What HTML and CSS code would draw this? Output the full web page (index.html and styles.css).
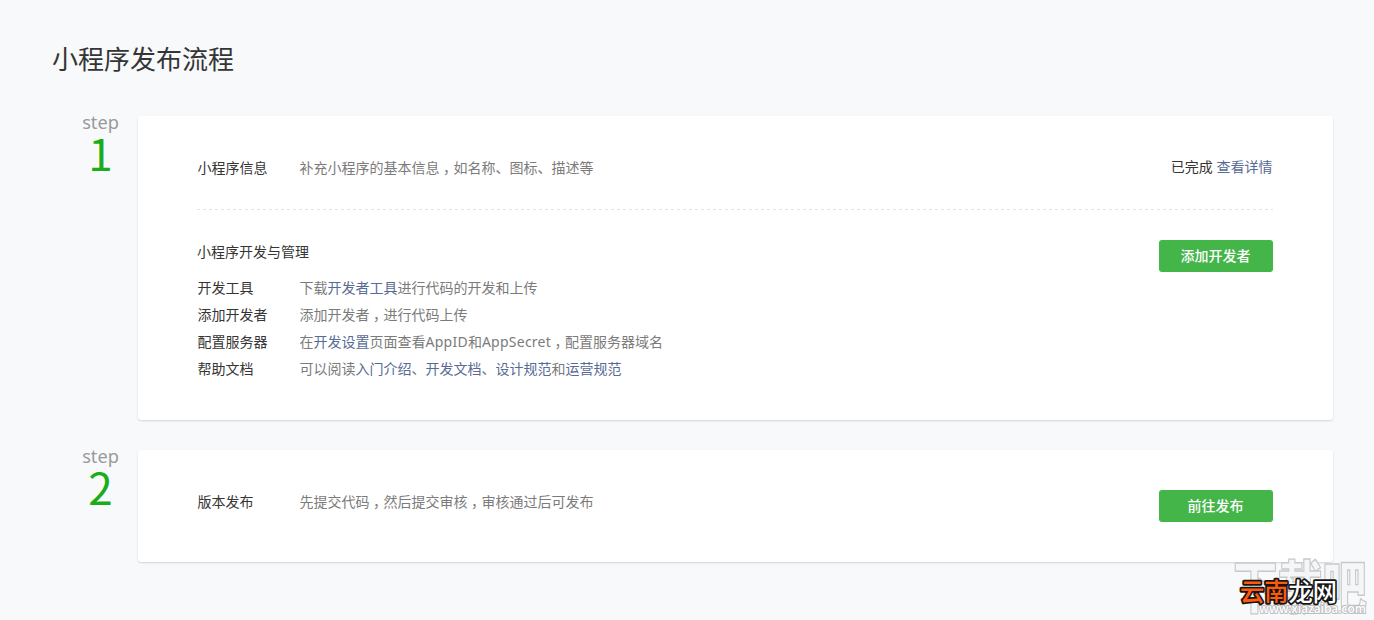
FILE: index.html
```html
<!DOCTYPE html>
<html lang="zh-CN">
<head>
<meta charset="utf-8">
<title>小程序发布流程</title>
<link rel="stylesheet" href="styles.css">
</head>
<body>
<main class="page">
  <h1 class="title">小程序发布流程</h1>
  <section class="step">
    <div class="step-label"><span class="step-word">step</span><span class="step-num">1</span></div>
    <div class="card">
      <div class="row info">
        <span class="label">小程序信息</span>
        <p class="desc">补充小程序的基本信息<span class="comma">，</span>如名称、图标、描述等</p>
        <span class="status">已完成 <a>查看详情</a></span>
      </div>
      <div class="row develop">
        <div class="content">
          <h2 class="subtitle">小程序开发与管理</h2>
          <div class="line"><span class="label">开发工具</span><p class="desc">下载<a>开发者工具</a>进行代码的开发和上传</p></div>
          <div class="line"><span class="label">添加开发者</span><p class="desc">添加开发者<span class="comma">，</span>进行代码上传</p></div>
          <div class="line"><span class="label">配置服务器</span><p class="desc">在<a>开发设置</a>页面查看<span class="latin">AppID</span>和<span class="latin">AppSecret</span><span class="comma">，</span>配置服务器域名</p></div>
          <div class="line"><span class="label">帮助文档</span><p class="desc">可以阅读<a>入门介绍</a>、<a>开发文档</a>、<a>设计规范</a>和<a>运营规范</a></p></div>
        </div>
        <button class="btn">添加开发者</button>
      </div>
    </div>
  </section>
  <section class="step">
    <div class="step-label"><span class="step-word">step</span><span class="step-num">2</span></div>
    <div class="card">
      <div class="row release">
        <span class="label">版本发布</span>
        <p class="desc">先提交代码<span class="comma">，</span>然后提交审核<span class="comma">，</span>审核通过后可发布</p>
        <button class="btn">前往发布</button>
      </div>
    </div>
  </section>
</main>
<svg class="watermark" width="144" height="66" viewBox="0 0 144 66">
  <text class="wm-back" transform="translate(3 54) scale(1 1.18)" x="0" y="0" textLength="134" lengthAdjust="spacingAndGlyphs">下载吧</text>
  <text class="wm-url" x="29" y="59" textLength="107" lengthAdjust="spacingAndGlyphs">www.xiazaiba.com</text>
  <text class="wm-front" x="10" y="46.500" textLength="97" lengthAdjust="spacingAndGlyphs"><tspan class="wm-orange">云南</tspan><tspan>龙网</tspan></text>
</svg>
</body>
</html>
```
FILE: styles.css
```css
* { box-sizing: border-box; }
body {
  margin: 0;
  height: 620px;
  overflow: hidden;
  position: relative;
  background: #f8f9fb;
  color: #353535;
  font: 14px/27px "Noto Sans", "Noto Sans CJK SC", sans-serif;
}
.page { padding: 40px 41px 0 52px; }
h1, h2, p { margin: 0; font-weight: 400; }
a { color: #576b95; text-decoration: none; }
.title { font-size: 26px; line-height: 38px; height: 76px; }
.step { display: flex; margin-bottom: 30px; }
.step-label {
  width: 86px;
  padding-left: 11px;
  display: flex;
  flex-direction: column;
  align-items: center;
}
.step-word { font-size: 18.2px; line-height: 18px; height: 18px; color: #9a9a9a; margin-top: -3px; }
.step-num {
  font: 44px/44px "Noto Sans CJK SC", sans-serif;
  color: #1aad19;
  margin-top: -1px;
}
.card {
  flex: 1;
  padding: 0 60px 0 59px;
  background: #fff;
  border-radius: 3px;
  box-shadow: 0 1px 2px rgba(0, 0, 0, .15);
}
.row { display: flex; align-items: flex-start; }
.info {
  height: 94px;
  padding-top: 38px;
  background: repeating-linear-gradient(90deg, #e4e4e4 0 3px, transparent 3px 6px) left bottom / 100% 1px no-repeat;
}
.label { width: 102.5px; padding-left: .4px; flex: none; }
.desc { flex: 1; color: #7b7b7b; white-space: nowrap; }
.comma { padding-left: 3.5px; margin-right: -3.5px; }
.latin { letter-spacing: .25px; }
.status { margin: -1px .6px 0 0; }
.develop { height: 210px; padding-top: 30px; }
.content { flex: 1; }
.subtitle { font-size: 14px; line-height: 24px; height: 34px; }
.line { display: flex; }
.btn {
  width: 114px;
  height: 32px;
  padding: 0 1px 2px 0;
  border: 0;
  border-radius: 3px;
  background: #44b549;
  color: #fff;
  font: 500 14px/30px "Noto Sans CJK SC", sans-serif;
}
.release { height: 112px; padding-top: 40px; }
.release .label, .release .desc { margin-top: -2px; }
.watermark { position: absolute; right: 0; bottom: 0; width: 144px; height: 66px; }
.watermark text { font-family: "Noto Sans CJK SC", sans-serif; }
.wm-back { font-size: 48px; font-weight: 900; fill: #f5f6f7; stroke: #c9cacc; stroke-width: 1.2px; }
.wm-url { font-size: 12px; font-weight: 500; fill: #fff; stroke: #bcbdbf; stroke-width: 1.8px; paint-order: stroke; }
.wm-front { font-size: 25px; font-weight: 500; fill: #fff; stroke: #151515; stroke-width: 3.5px; stroke-linejoin: round; paint-order: stroke; }
.watermark .wm-orange { fill: #ff5a0a; }
```
